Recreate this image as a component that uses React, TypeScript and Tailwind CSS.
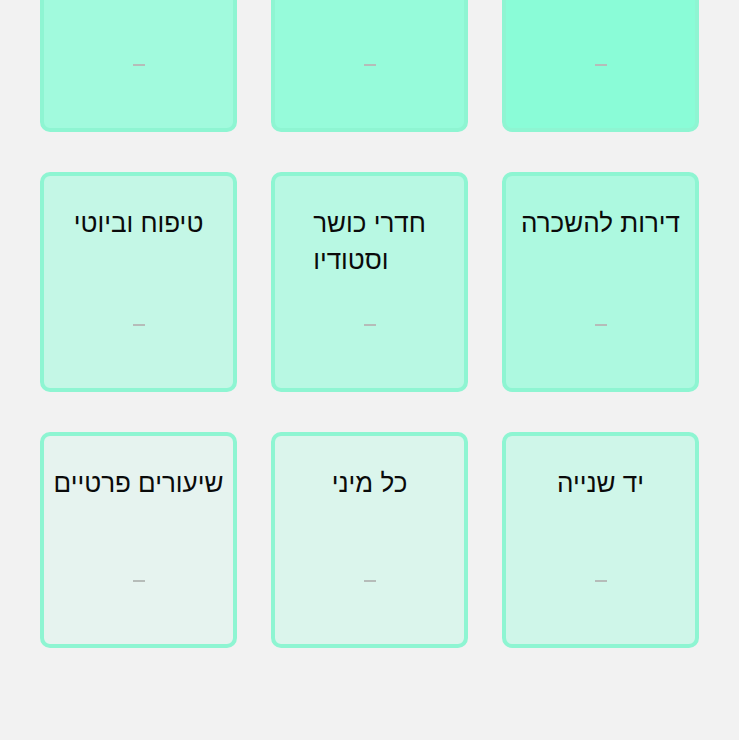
const categories = [
  { title: "", bg: "bg-[#8afcd7]" },
  { title: "", bg: "bg-[#96fbda]" },
  { title: "", bg: "bg-[#a1fadd]" },
  { title: "דירות להשכרה", bg: "bg-[#adf9e0]" },
  { title: ["חדרי כושר", "וסטודיו"], bg: "bg-[#b8f8e3]" },
  { title: "טיפוח וביוטי", bg: "bg-[#c4f7e6]" },
  { title: "יד שנייה", bg: "bg-[#cff6e9]" },
  { title: "כל מיני", bg: "bg-[#dbf5ec]" },
  { title: "שיעורים פרטיים", bg: "bg-[#e6f3ef]" },
];

function CategoryCard({ title, bg }: { title: string | string[]; bg: string }) {
  return (
    <div
      className={`flex min-h-[216px] flex-col items-center rounded-[10px] border-[4px] border-[#8ef5d2] px-2 pt-[29px] pb-[62px] ${bg}`}
    >
      {title.length > 0 && (
        <h2 className="mb-[45px] inline-block text-left text-[26px] leading-[37px] font-normal text-[#0a0a0a]">
          {Array.isArray(title)
            ? title.map((line, i) => (
                <span key={i} className="block">
                  {line}
                </span>
              ))
            : title}
        </h2>
      )}
      <div className="mt-auto h-[2px] w-[12px] bg-[#b6bcb9]" />
    </div>
  );
}

export default function App() {
  return (
    <div
      className="h-[740px] overflow-hidden bg-[#f2f2f2] px-[40px]"
      style={{ fontFamily: '"Liberation Sans", Arial, sans-serif' }}
    >
      <div dir="rtl" className="-mt-[84px] grid grid-cols-3 gap-x-[34px] gap-y-[40px]">
        {categories.map((c, i) => (
          <CategoryCard key={i} title={c.title} bg={c.bg} />
        ))}
      </div>
    </div>
  );
}
